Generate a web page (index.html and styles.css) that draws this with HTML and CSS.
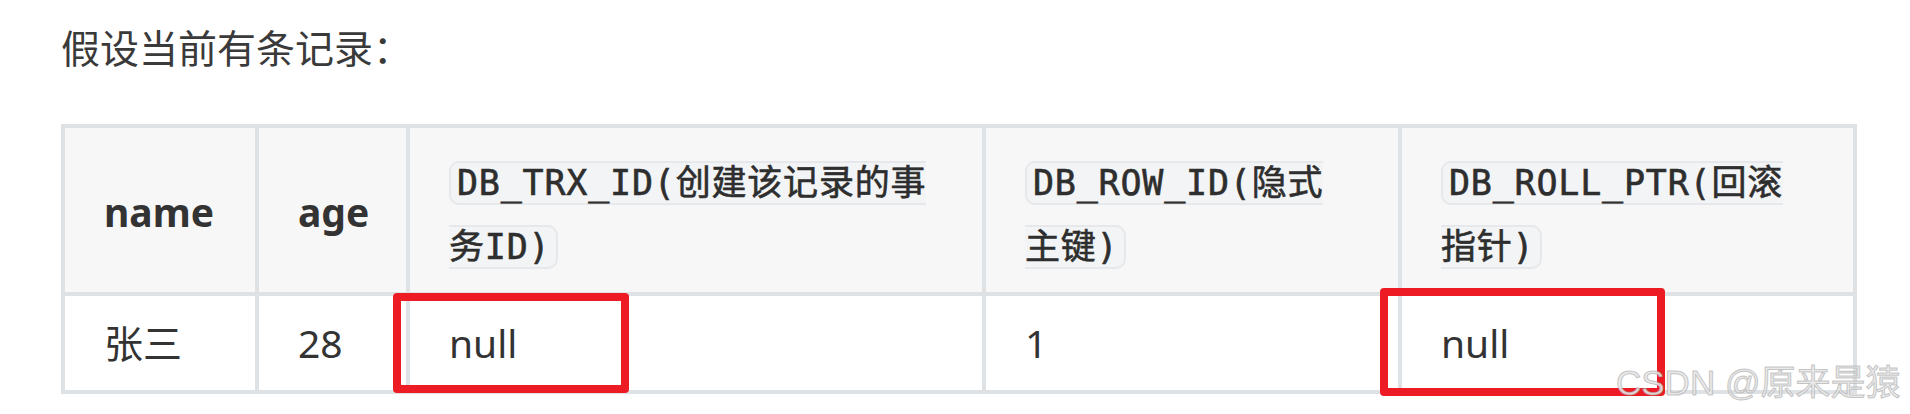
FILE: index.html
```html
<!DOCTYPE html>
<html lang="zh-CN">
<head>
<meta charset="utf-8">
<title>记录示例</title>
<link rel="stylesheet" href="styles.css">
</head>
<body>
<div class="page">
  <p class="lead">假设当前有条记录：</p>
  <table class="records">
    <colgroup>
      <col class="c-name">
      <col class="c-age">
      <col class="c-trx">
      <col class="c-row">
      <col class="c-roll">
    </colgroup>
    <thead>
      <tr>
        <th>name</th>
        <th>age</th>
        <th class="code-head"><code>DB_TRX_ID(创建该记录的事<br>务ID)</code></th>
        <th class="code-head"><code>DB_ROW_ID(隐式<br>主键)</code></th>
        <th class="code-head"><code>DB_ROLL_PTR(回滚<br>指针)</code></th>
      </tr>
    </thead>
    <tbody>
      <tr>
        <td>张三</td>
        <td>28</td>
        <td>null</td>
        <td>1</td>
        <td>null</td>
      </tr>
    </tbody>
  </table>
  <span class="mark mark-trx"></span>
  <span class="mark mark-roll"></span>
  <div class="watermark">CSDN @原来是猿</div>
</div>
</body>
</html>
```
FILE: styles.css
```css
html, body {
  margin: 0;
  padding: 0;
  background: #ffffff;
}

body {
  width: 1910px;
  height: 414px;
  overflow: hidden;
  font-family: "Noto Sans", "Noto Sans CJK SC", sans-serif;
  color: #333333;
}

.page {
  position: relative;
  height: 414px;
  padding-left: 61px;
  box-sizing: border-box;
}

.lead {
  margin: 0;
  padding-top: 17px;
  height: 62px;
  font-size: 39px;
  line-height: 62px;
  color: #3a3a3a;
  margin-bottom: 45px;
}

.records {
  width: 1796px;
  table-layout: fixed;
  border-collapse: separate;
  border-spacing: 0;
  border-top: 4px solid #dfe2e5;
  border-left: 4px solid #dfe2e5;
  font-size: 39px;
}

.c-name { width: 194px; }
.c-age { width: 151px; }
.c-trx { width: 576px; }
.c-row { width: 416px; }
.c-roll { width: 455px; }

.records th,
.records td {
  border-right: 4px solid #dfe2e5;
  border-bottom: 4px solid #dfe2e5;
  text-align: left;
  vertical-align: middle;
  box-sizing: border-box;
}

.records th {
  background: #f7f7f7;
  padding: 20px 39px 16px;
  line-height: 64px;
  font-weight: 700;
  color: #333333;
}

.records td {
  background: #ffffff;
  padding: 19px 39px;
  line-height: 56px;
  font-weight: 400;
  height: 98px;
}

.code-head code {
  font-family: "DejaVu Sans Mono", "Noto Sans CJK SC", monospace;
  font-size: 35px;
  letter-spacing: 0.8px;
  line-height: 1;
  font-weight: 400;
  color: #2e2e2e;
  -webkit-text-stroke: 0.6px #2e2e2e;
  background: #f3f4f5;
  border: 2px solid #e6e8eb;
  border-radius: 10px;
  padding: 0 6px;
}

.mark {
  position: absolute;
  border: 8px solid #ed1c24;
  border-radius: 4px;
  box-sizing: border-box;
}

.mark-trx {
  left: 393px;
  top: 293px;
  width: 236px;
  height: 100px;
}

.mark-roll {
  left: 1380px;
  top: 288px;
  width: 285px;
  height: 108px;
}

.watermark {
  position: absolute;
  left: 1616px;
  top: 365px;
  font-family: "Liberation Sans", "Noto Sans CJK SC", sans-serif;
  font-size: 35px;
  line-height: 35px;
  white-space: nowrap;
  color: rgba(232, 232, 232, 0.9);
  -webkit-text-stroke: 1px rgba(150, 150, 150, 0.5);
}
```
